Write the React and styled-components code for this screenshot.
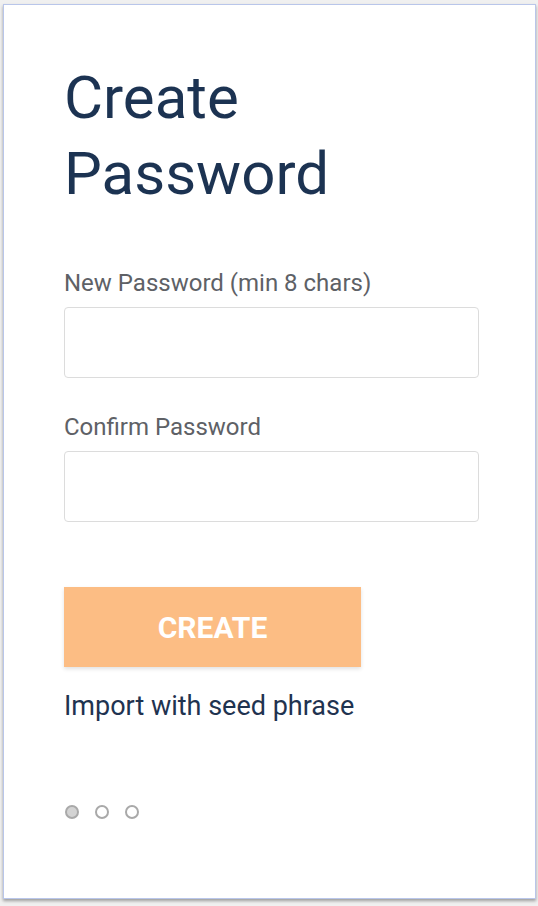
import styled, { createGlobalStyle } from 'styled-components';

const GlobalStyle = createGlobalStyle`
  html, body {
    margin: 0;
    padding: 0;
    background: #f0f0f0;
  }
  body {
    font-family: Roboto, "Liberation Sans", sans-serif;
  }
`;

const Page = styled.div`
  width: 538px;
  height: 906px;
  padding: 4px 2px 0 3px;
  box-sizing: border-box;
`;

const Popup = styled.div`
  width: 533px;
  height: 895px;
  box-sizing: border-box;
  background: #fff;
  border: 1px solid #b9c6ea;
  box-shadow: 0 2px 3px rgba(0, 0, 0, 0.35);
  padding: 55px 57px 0 60px;
  display: flex;
  flex-direction: column;
`;

const Title = styled.h1`
  margin: 0;
  font-size: 60px;
  line-height: 76px;
  font-weight: 400;
  color: #1c3352;
`;

const Field = styled.div`
  display: flex;
  flex-direction: column;
  margin-top: ${(p) => p.$top}px;
`;

const Label = styled.label`
  font-size: 24px;
  line-height: 28px;
  color: #5e6166;
  margin-bottom: 10px;
`;

const Input = styled.input`
  width: 415px;
  height: 71px;
  box-sizing: border-box;
  border: 1px solid #dcdcdc;
  border-radius: 4px;
  outline: none;
  font-size: 20px;
  padding: 0 14px;
`;

const CreateButton = styled.button`
  margin-top: 65px;
  width: 297px;
  height: 80px;
  border: none;
  background: #fcbd84;
  color: #fff;
  font-family: Roboto, "Liberation Sans", sans-serif;
  font-size: 30px;
  font-weight: 700;
  box-shadow: 0 2px 4px rgba(0, 0, 0, 0.12);
  cursor: pointer;
`;

const SeedLink = styled.a`
  margin-top: 23px;
  font-size: 27px;
  line-height: 32px;
  color: #1f3350;
  text-decoration: none;
  cursor: pointer;
`;

const Dots = styled.div`
  display: flex;
  gap: 16px;
  margin-top: 83px;
  margin-left: 1px;
`;

const Dot = styled.span`
  width: 14px;
  height: 14px;
  box-sizing: border-box;
  border-radius: 50%;
  border: 2px solid #a9a9a9;
  background: ${(p) => (p.$active ? '#d3d3d3' : '#fff')};
`;

export default function App() {
  return (
    <>
      <GlobalStyle />
      <Page>
        <Popup>
          <Title>
            Create
            <br />
            Password
          </Title>
          <Field $top={57}>
            <Label>New Password (min 8 chars)</Label>
            <Input type="password" />
          </Field>
          <Field $top={35}>
            <Label>Confirm Password</Label>
            <Input type="password" />
          </Field>
          <CreateButton>CREATE</CreateButton>
          <SeedLink>Import with seed phrase</SeedLink>
          <Dots>
            <Dot $active />
            <Dot />
            <Dot />
          </Dots>
        </Popup>
      </Page>
    </>
  );
}
